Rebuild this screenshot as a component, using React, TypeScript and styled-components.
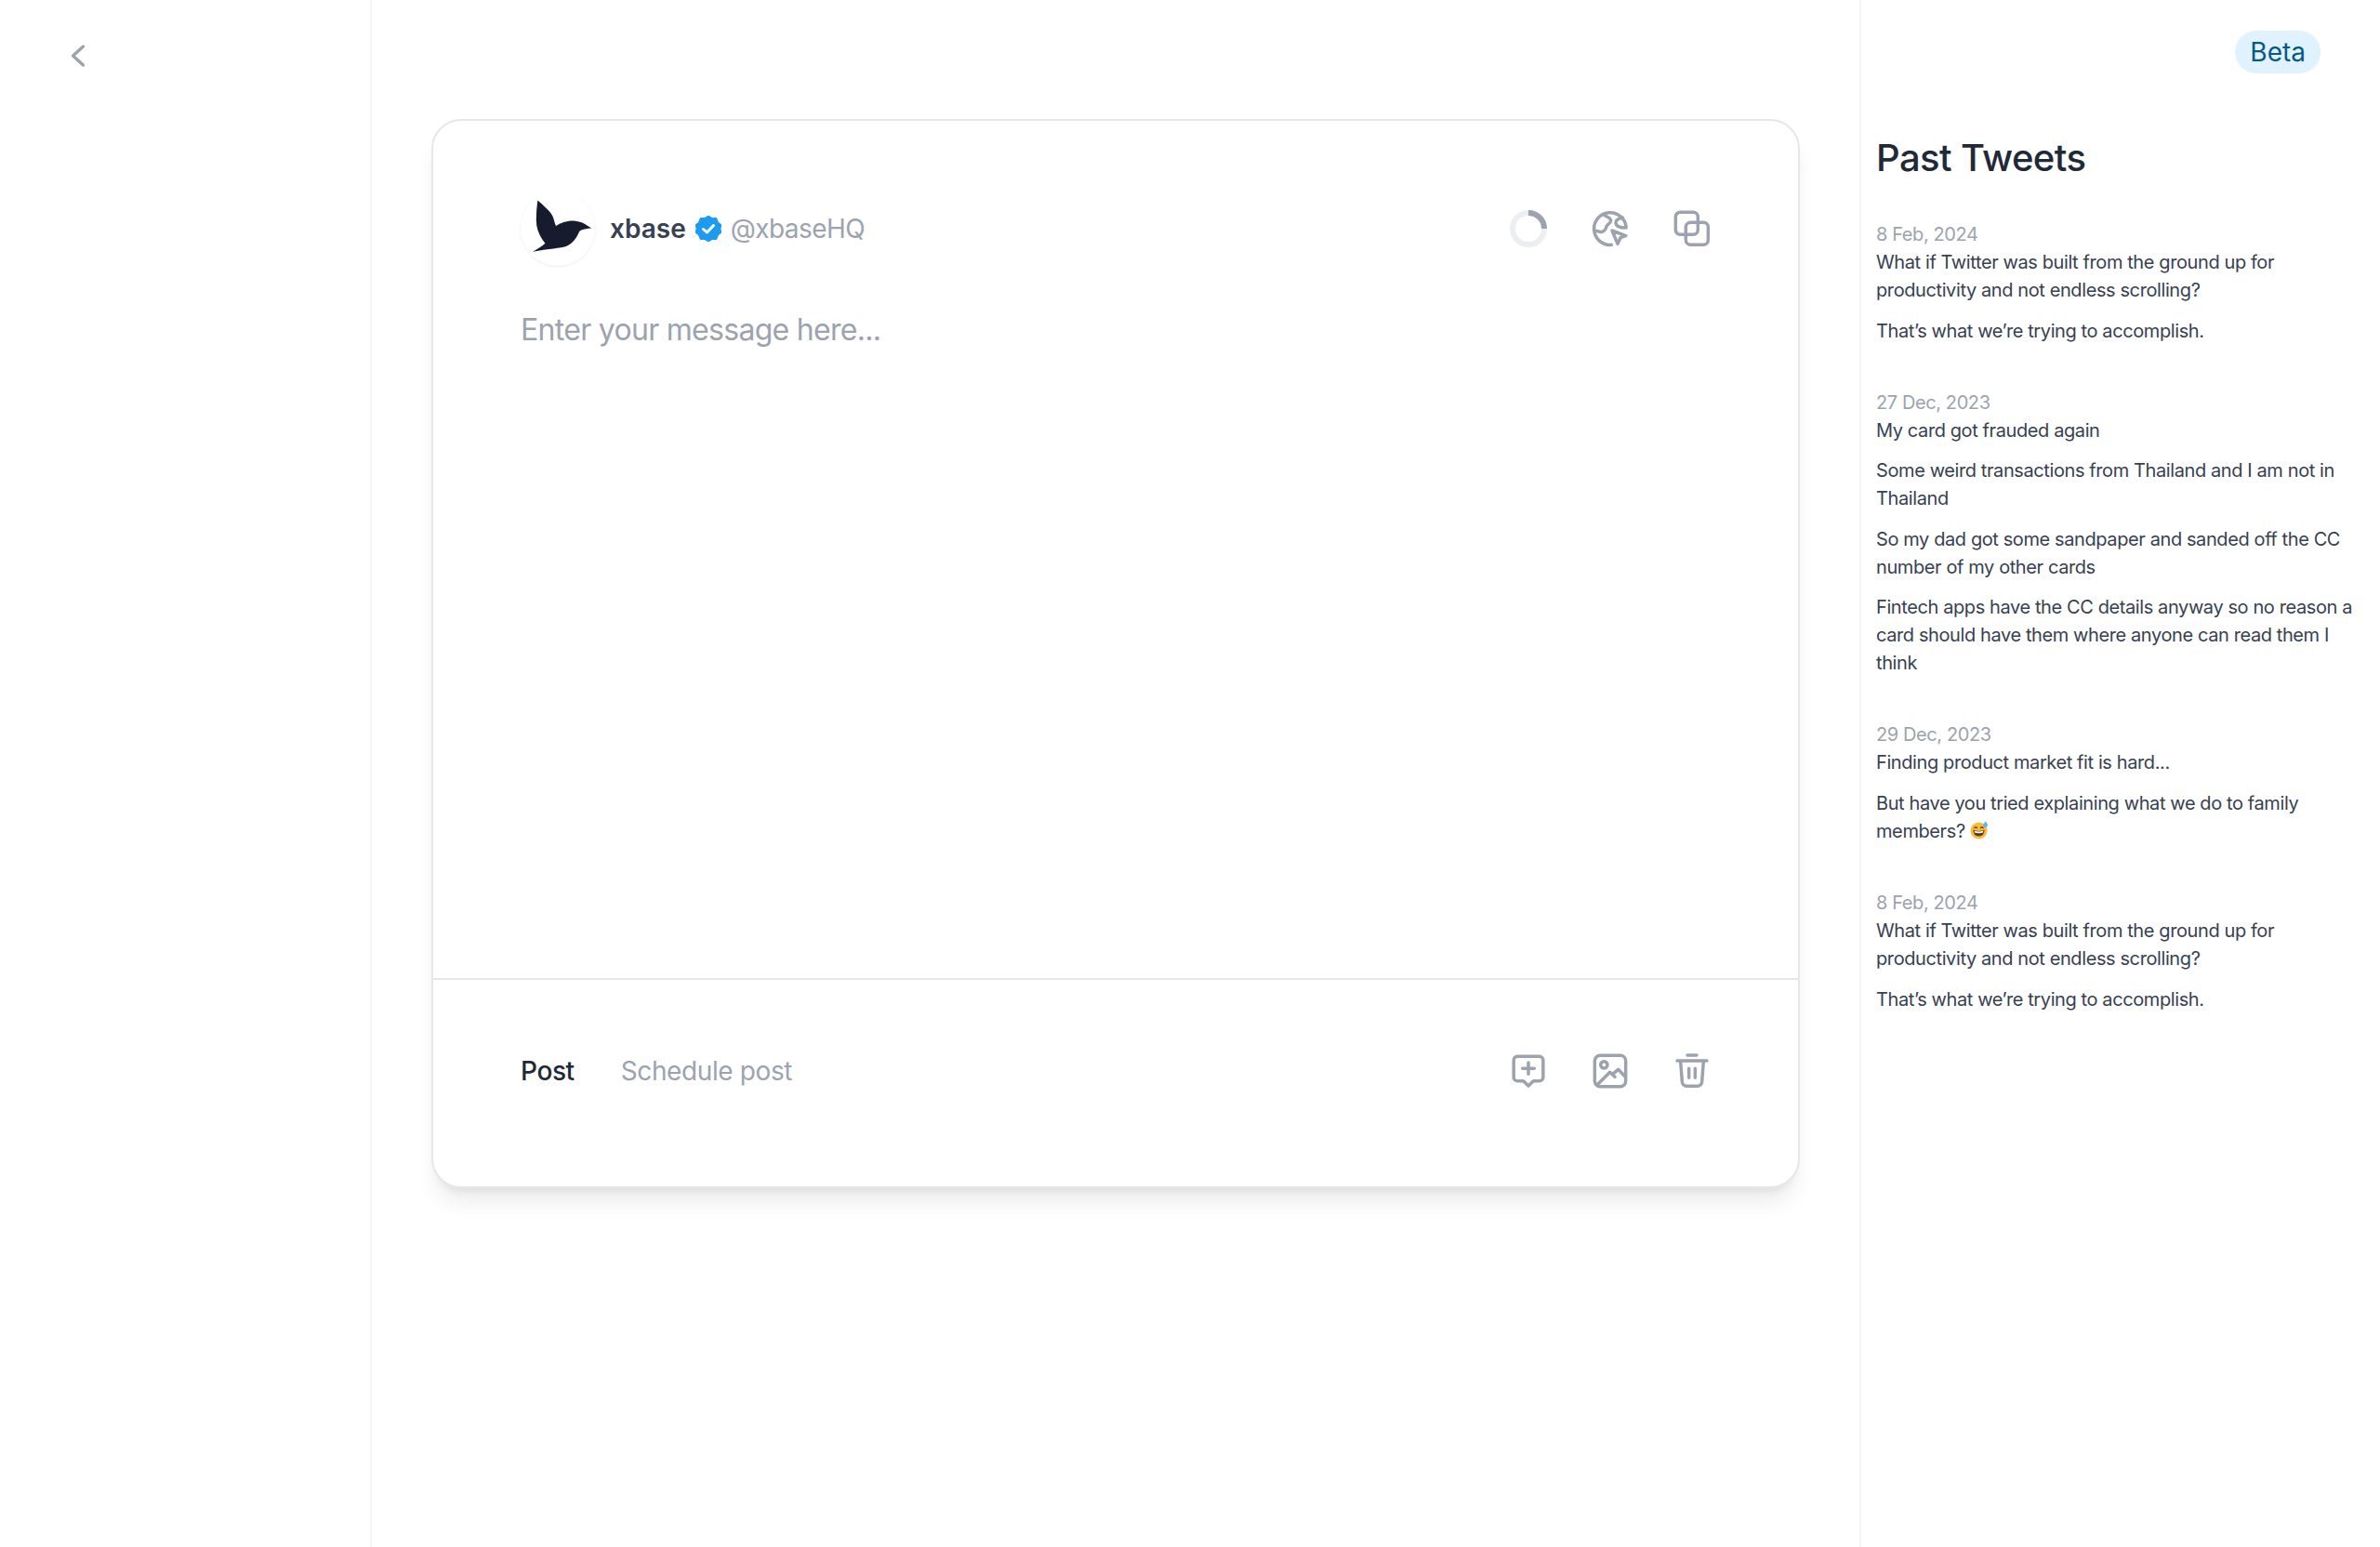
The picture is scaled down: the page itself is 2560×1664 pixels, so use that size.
import React from "react";
import styled, { createGlobalStyle } from "styled-components";

const GlobalStyle = createGlobalStyle`
  html, body {
    margin: 0;
    padding: 0;
    background: #ffffff;
    font-family: Inter, "Liberation Sans", sans-serif;
  }
  * { box-sizing: border-box; }
`;

const Page = styled.div`
  display: grid;
  grid-template-columns: 400px 1600px 560px;
  height: 1664px;
  overflow: hidden;
`;

const LeftBar = styled.aside`
  border-right: 2px solid #f3f4f6;
  padding: 40px 0 0 68px;
`;

const BackButton = styled.button`
  display: block;
  border: 0;
  background: none;
  padding: 0;
  width: 32px;
  height: 40px;
  color: #9ca3af;
`;

const Main = styled.main`
  padding: 128px 64px 0;
`;

const Card = styled.section`
  width: 1472px;
  height: 1150px;
  border: 2px solid #e5e7eb;
  border-radius: 32px;
  background: #fff;
  box-shadow: 0 20px 25px -5px rgba(0, 0, 0, 0.08), 0 8px 10px -6px rgba(0, 0, 0, 0.08);
  display: flex;
  flex-direction: column;
`;

const Editor = styled.div`
  flex: 1;
  padding: 76px 94px 0 94px;
  border-bottom: 2px solid #e5e7eb;
`;

const Header = styled.div`
  display: flex;
  align-items: center;
  justify-content: space-between;
`;

const Account = styled.div`
  display: flex;
  align-items: center;
`;

const Avatar = styled.div`
  width: 80px;
  height: 80px;
  border-radius: 50%;
  box-shadow: 0 1px 3px rgba(0, 0, 0, 0.08);
  display: flex;
  align-items: center;
  justify-content: center;
  padding: 0 0 6px 10px;
  margin-right: 16px;
`;

const Name = styled.span`
  font-size: 28px;
  font-weight: 600;
  color: #374151;
  margin-right: 10px;
`;

const Handle = styled.span`
  font-size: 28px;
  letter-spacing: -0.02em;
  color: #9ca3af;
  margin-left: 10px;
`;

const IconRow = styled.div`
  display: flex;
  align-items: center;
  gap: 48px;
`;

const IconButton = styled.div`
  width: 40px;
  height: 40px;
  color: #9ca3af;
`;

const Placeholder = styled.div`
  margin-top: 45px;
  font-size: 32px;
  line-height: 48px;
  letter-spacing: -0.022em;
  color: #9ca3af;
`;

const Footer = styled.div`
  height: 222px;
  padding: 0 94px 26px 94px;
  display: flex;
  align-items: center;
  justify-content: space-between;
`;

const Tabs = styled.div`
  display: flex;
  gap: 50px;
`;

const Tab = styled.span<{ $active?: boolean }>`
  font-size: 28px;
  letter-spacing: -0.014em;
  font-weight: ${(p) => (p.$active ? 500 : 400)};
  color: ${(p) => (p.$active ? "#1f2937" : "#9ca3af")};
`;

const RightPanel = styled.aside`
  border-left: 2px solid #f3f4f6;
  padding: 33px 8px 0 16px;
`;

const BetaRow = styled.div`
  display: flex;
  justify-content: flex-end;
  padding-right: 56px;
`;

const Beta = styled.span`
  background: #e0f2fe;
  color: #075985;
  font-size: 28px;
  line-height: 46px;
  padding: 0 16px;
  border-radius: 24px;
`;

const Title = styled.h2`
  margin: 63px 0 39px;
  font-size: 40px;
  line-height: 56px;
  font-weight: 500;
  letter-spacing: -0.015em;
  color: #1f2937;
`;

const Tweet = styled.article`
  margin-bottom: 47px;
`;

const TweetDate = styled.div`
  font-size: 20px;
  line-height: 30px;
  letter-spacing: -0.02em;
  color: #9ca3af;
`;

const Para = styled.p`
  margin: 0 0 13.6px;
  font-size: 20px;
  line-height: 30px;
  letter-spacing: -0.02em;
  color: #374151;
`;

const EmojiIcon = styled.svg`
  width: 20px;
  height: 20px;
  vertical-align: -2px;
`;

const Icon = ({ children }: { children: React.ReactNode }) => (
  <IconButton>
    <svg width="40" height="40" viewBox="0 0 24 24" fill="none" stroke="currentColor" strokeWidth="2.1" strokeLinecap="round" strokeLinejoin="round">
      {children}
    </svg>
  </IconButton>
);

const Bird = () => (
  <svg width="64" height="58" viewBox="165 115 182 162">
    <defs>
      <filter id="soft" x="-5%" y="-5%" width="110%" height="110%">
        <feGaussianBlur stdDeviation="1.6" />
      </filter>
    </defs>
    <path
      d="M180 118 C198 134 216 148 226 166 C231 178 232 188 236 196 C252 186 274 178 296 181 C316 183 330 193 345 203 C330 204 316 206 308 212 C298 236 284 254 262 260 C236 266 198 268 165 275 C180 266 194 258 203 249 C184 226 174 198 176 172 C176 154 178 136 180 118 Z"
      fill="#161d2e"
      filter="url(#soft)"
    />
  </svg>
);

const VerifiedBadge = () => (
  <svg width="28" height="28" viewBox="0 0 28 28">
    <path
      d="M14 0 L18 2.6 L22.7 2.6 L24.4 7 L28 10 L26.8 14 L28 18 L24.4 21 L22.7 25.4 L18 25.4 L14 28 L10 25.4 L5.3 25.4 L3.6 21 L0 18 L1.2 14 L0 10 L3.6 7 L5.3 2.6 L10 2.6 Z"
      fill="#1d9bf0"
      stroke="#1d9bf0"
      strokeWidth="1"
      strokeLinejoin="round"
    />
    <path d="M8.5 14.5 L12.4 18 L19.5 10.5" fill="none" stroke="#fff" strokeWidth="3" strokeLinecap="round" strokeLinejoin="round" />
  </svg>
);

const SweatEmoji = () => (
  <EmojiIcon viewBox="0 0 20 20" role="img" aria-label="grinning face with sweat">
    <circle cx="9.5" cy="10.5" r="9" fill="#f9b93a" />
    <path d="M3.4 9.6 Q9.5 12.2 15.6 9.6 Q15.4 16.4 9.5 16.6 Q3.6 16.4 3.4 9.6 Z" fill="#5b3a1a" />
    <path d="M4.6 10.6 Q9.5 12.6 14.4 10.6 L14 12.6 Q9.5 14 5 12.6 Z" fill="#fff" />
    <path d="M4.8 7.6 Q6.2 5.6 7.6 7.6 M11.4 7.6 Q12.8 5.6 14.2 7.6" fill="none" stroke="#5b3a1a" strokeWidth="1.1" strokeLinecap="round" />
    <path d="M16.6 0.6 Q19.6 4 18.8 5.6 A2.4 2.4 0 0 1 14.4 5.6 Q13.8 4 16.6 0.6 Z" fill="#59b6ee" />
  </EmojiIcon>
);

const tweets = [
  {
    date: "8 Feb, 2024",
    paras: ["What if Twitter was built from the ground up for productivity and not endless scrolling?", "That’s what we’re trying to accomplish."],
  },
  {
    date: "27 Dec, 2023",
    paras: [
      "My card got frauded again",
      "Some weird transactions from Thailand and I am not in Thailand",
      "So my dad got some sandpaper and sanded off the CC number of my other cards",
      "Fintech apps have the CC details anyway so no reason a card should have them where anyone can read them I think",
    ],
  },
  {
    date: "29 Dec, 2023",
    paras: ["Finding product market fit is hard...", "But have you tried explaining what we do to family members?"],
    emoji: true,
  },
  {
    date: "8 Feb, 2024",
    paras: ["What if Twitter was built from the ground up for productivity and not endless scrolling?", "That’s what we’re trying to accomplish."],
  },
];

export default function App() {
  return (
    <Page>
      <GlobalStyle />
      <LeftBar>
        <BackButton aria-label="Back">
          <svg width="32" height="40" viewBox="0 0 32 40" fill="none" stroke="currentColor" strokeWidth="3.4" strokeLinecap="round" strokeLinejoin="round">
            <path d="M21.5 10 L10.5 20 L21.5 30" />
          </svg>
        </BackButton>
      </LeftBar>
      <Main>
        <Card>
          <Editor>
            <Header>
              <Account>
                <Avatar>
                  <Bird />
                </Avatar>
                <Name>xbase</Name>
                <VerifiedBadge />
                <Handle>@xbaseHQ</Handle>
              </Account>
              <IconRow>
                <Icon>
                  <circle cx="12" cy="12" r="10.2" stroke="#eceef1" strokeWidth="3.6" />
                  <path d="M12 1.8 A10.2 10.2 0 0 1 22.2 12" strokeWidth="3.6" strokeLinecap="butt" />
                </Icon>
                <Icon>
                  <path d="M22.3 11 A10.4 10.4 0 1 0 12.8 22.4" />
                  <path d="M7.6 2.6 C9 4.5 12.6 4.6 12.4 6.8 C12.2 9 9.6 9 9.4 11 C9.2 13 7 14.6 5.4 14 C4 13.6 3 13.4 1.8 13.4" />
                  <path d="M20 5 C17.5 5.4 15.4 6.4 15.6 8.4 C15.8 10.2 17 11.4 22 11.4" />
                  <path d="M13.2 13.2 L22 16.6 L18.6 17.8 L16.8 21.8 Z" />
                </Icon>
                <Icon>
                  <rect x="1.4" y="1.4" width="14.4" height="14.4" rx="3" />
                  <rect x="8" y="8" width="14.4" height="14.4" rx="3" />
                </Icon>
              </IconRow>
            </Header>
            <Placeholder>Enter your message here...</Placeholder>
          </Editor>
          <Footer>
            <Tabs>
              <Tab $active>Post</Tab>
              <Tab>Schedule post</Tab>
            </Tabs>
            <IconRow>
              <Icon>
                <path d="M5 2.5 H19 A2.5 2.5 0 0 1 21.5 5 V16 A2.5 2.5 0 0 1 19 18.5 H15.2 L12 21.6 L8.8 18.5 H5 A2.5 2.5 0 0 1 2.5 16 V5 A2.5 2.5 0 0 1 5 2.5 Z" />
                <path d="M12 6.6 V14 M8.2 10.4 H15.8" />
              </Icon>
              <Icon>
                <rect x="2" y="2" width="20" height="20" rx="3.5" />
                <circle cx="8" cy="8" r="2.2" />
                <path d="M4 20.5 L11.8 12.8 L15 15.8 M13.4 14.2 L17.2 11 L21.6 15.6" />
              </Icon>
              <Icon>
                <path d="M2.4 5.4 H21.6 M9 1.8 H15" />
                <path d="M4.6 5.6 L5.6 19 A3 3 0 0 0 8.6 21.8 H15.4 A3 3 0 0 0 18.4 19 L19.4 5.6" />
                <path d="M10 10.4 V16.4 M14 10.4 V16.4" />
              </Icon>
            </IconRow>
          </Footer>
        </Card>
      </Main>
      <RightPanel>
        <BetaRow>
          <Beta>Beta</Beta>
        </BetaRow>
        <Title>Past Tweets</Title>
        {tweets.map((t, i) => (
          <Tweet key={i}>
            <TweetDate>{t.date}</TweetDate>
            {t.paras.map((p, j) => (
              <Para key={j}>
                {p}
                {t.emoji && j === t.paras.length - 1 ? (
                  <>
                    {" "}
                    <SweatEmoji />
                  </>
                ) : null}
              </Para>
            ))}
          </Tweet>
        ))}
      </RightPanel>
    </Page>
  );
}
